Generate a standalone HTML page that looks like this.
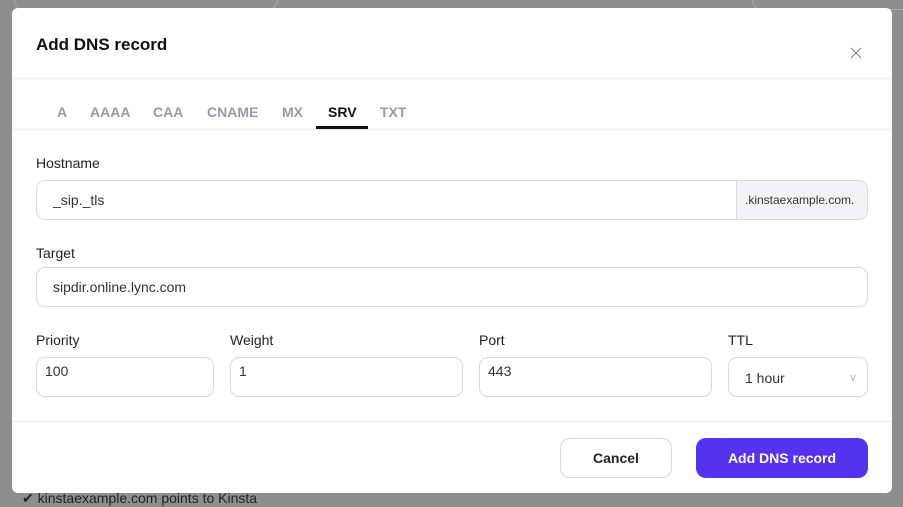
<!DOCTYPE html><html><head><style>
*{box-sizing:border-box;margin:0;padding:0}
body{width:903px;height:501px;background:#8e8e8e;font-family:"Liberation Sans",sans-serif;position:relative;overflow:hidden;color:#111}
.bg1{position:absolute;left:14px;top:-10px;width:264px;height:20px;border:1px solid #a8a8a8;border-radius:10px}
.bg2{position:absolute;left:752px;top:-10px;width:160px;height:20px;border:1px solid #a8a8a8;border-radius:10px}
.foot{position:absolute;left:22px;top:490px;font-size:14px;color:#222}
.m{position:absolute;left:12px;top:8px;width:880px;height:485px;background:#fff;border-radius:6px}
.a{position:absolute}
.t{left:24px;top:27px;font-size:17px;font-weight:bold;color:#111}
.hr{left:0;width:880px;height:1px;background:#ececef}
.tab{top:96px;font-size:14px;font-weight:bold;color:#9a9aa3}
.lab{font-size:14px;color:#222}
.in{border:1px solid #d9d9de;border-radius:9px;font-size:14px;color:#333;padding-left:16px}
.btn{border-radius:10px;font-size:14px;font-weight:bold;text-align:center;line-height:38px}
</style></head><body>
<div class="bg1"></div><div class="bg2"></div>
<div class="foot">✔ kinstaexample.com points to Kinsta</div>
<div class="m">
<div class="a t">Add DNS record</div>
<svg class="a" style="left:838px;top:39px" width="12" height="12" viewBox="0 0 12 12"><path d="M1 1L11 11M11 1L1 11" stroke="#888" stroke-width="1.2"/></svg>
<div class="a hr" style="top:70px"></div>
<div class="a tab" style="left:45px">A</div>
<div class="a tab" style="left:78px">AAAA</div>
<div class="a tab" style="left:141px">CAA</div>
<div class="a tab" style="left:195px">CNAME</div>
<div class="a tab" style="left:270px">MX</div>
<div class="a tab" style="left:316px;color:#111">SRV</div>
<div class="a tab" style="left:368px">TXT</div>
<div class="a" style="left:304px;top:118px;width:52px;height:3px;background:#111"></div>
<div class="a hr" style="top:121px"></div>
<div class="a lab" style="left:24px;top:147px">Hostname</div>
<div class="a in" style="left:24px;top:172px;width:832px;height:40px;line-height:38px">_sip._tls</div>
<div class="a" style="left:724px;top:173px;width:131px;height:38px;background:#f3f3f6;border-left:1px solid #d9d9de;border-radius:0 8px 8px 0;font-size:12px;line-height:38px;padding-left:8px;color:#333">.kinstaexample.com.</div>
<div class="a lab" style="left:24px;top:237px">Target</div>
<div class="a in" style="left:24px;top:259px;width:832px;height:40px;line-height:38px">sipdir.online.lync.com</div>
<div class="a lab" style="left:24px;top:324px">Priority</div>
<div class="a lab" style="left:218px;top:324px">Weight</div>
<div class="a lab" style="left:467px;top:324px">Port</div>
<div class="a lab" style="left:716px;top:324px">TTL</div>
<div class="a in" style="left:24px;top:349px;width:178px;height:40px;padding:5px 8px">100</div>
<div class="a in" style="left:218px;top:349px;width:233px;height:40px;padding:5px 8px">1</div>
<div class="a in" style="left:467px;top:349px;width:233px;height:40px;padding:5px 8px">443</div>
<div class="a in" style="left:716px;top:349px;width:140px;height:40px;line-height:40px">1 hour<span style="position:absolute;right:10px;color:#bbb;font-size:11px">∨</span></div>
<div class="a hr" style="top:413px"></div>
<div class="a btn" style="left:548px;top:430px;width:112px;height:40px;border:1px solid #d9d9de;color:#222">Cancel</div>
<div class="a btn" style="left:684px;top:430px;width:172px;height:40px;background:#5333ed;color:#fff;line-height:40px">Add DNS record</div>
</div>
</body></html>
